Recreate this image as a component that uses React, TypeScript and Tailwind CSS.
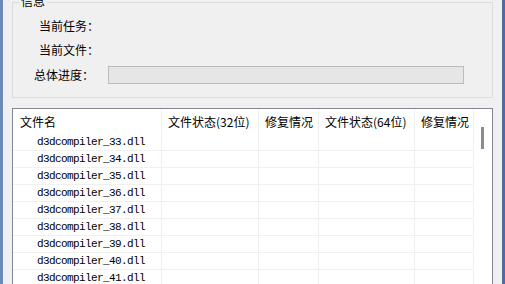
import React from 'react';

const files = [33, 34, 35, 36, 37, 38, 39, 40, 41, 42].map((n) => `d3dcompiler_${n}.dll`);

const cols = [
  { title: '文件名', w: 'w-[149px]' },
  { title: '文件状态(32位)', w: 'w-[97px]' },
  { title: '修复情况', w: 'w-[60px]' },
  { title: '文件状态(64位)', w: 'w-[96px]' },
  { title: '修复情况', w: 'w-[59px]' },
];

export default function App() {
  return (
    <div className="flex h-[284px] w-[505px] overflow-hidden bg-[#f0f0f0] font-['Noto_Sans_CJK_SC',sans-serif] text-[12px] leading-[16px] text-black">
      <div className="w-[3px] shrink-0 bg-[#6b8ab5]" />
      <div className="flex-1 px-[9px]">
        {/* info group */}
        <div className="relative mt-[2px] h-[96px] border border-[#dcdcdc] pt-[15px]">
          <div className="absolute left-[6px] top-[-10px] bg-[#f0f0f0] px-[2px]">信息</div>
          <div className="pl-[26px]">当前任务：</div>
          <div className="mt-[8px] pl-[26px]">当前文件：</div>
          <div className="mt-[8px] flex items-center">
            <div className="w-[95px] pl-[21px]">总体进度：</div>
            <div className="h-[18px] w-[356px] border border-[#bcbcbc] bg-[#e6e6e6]" />
          </div>
        </div>

        {/* file list */}
        <div className="mt-[10px] flex h-[200px] border border-[#828790] bg-white">
          <div className="w-[461px]">
            <div className="flex h-[25px]">
              {cols.map((c, i) => (
                <div key={i} className={`${c.w} flex items-center border-r border-[#f0f0f0] ${i === 0 ? 'pl-[7px]' : 'pl-[6px]'} whitespace-nowrap`}>
                  {c.title}
                </div>
              ))}
            </div>
            {files.map((f) => (
              <div key={f} className="flex h-[17px] border-b border-[#f0f0f0]">
                {cols.map((c, i) => (
                  <div key={i} className={`${c.w} flex items-center border-r border-[#f0f0f0]`}>
                    {i === 0 && (
                      <span className="pl-[24px] font-['Liberation_Mono',monospace] text-[11px] tracking-[-0.6px]">{f}</span>
                    )}
                  </div>
                ))}
              </div>
            ))}
          </div>
          {/* scrollbar */}
          <div className="w-[18px] pt-[18px]">
            <div className="ml-[7px] h-[22px] w-[3px] bg-[#8b8b8b]" />
          </div>
        </div>
      </div>
      <div className="w-[3px] shrink-0 bg-[#4d6e9e]" />
    </div>
  );
}
